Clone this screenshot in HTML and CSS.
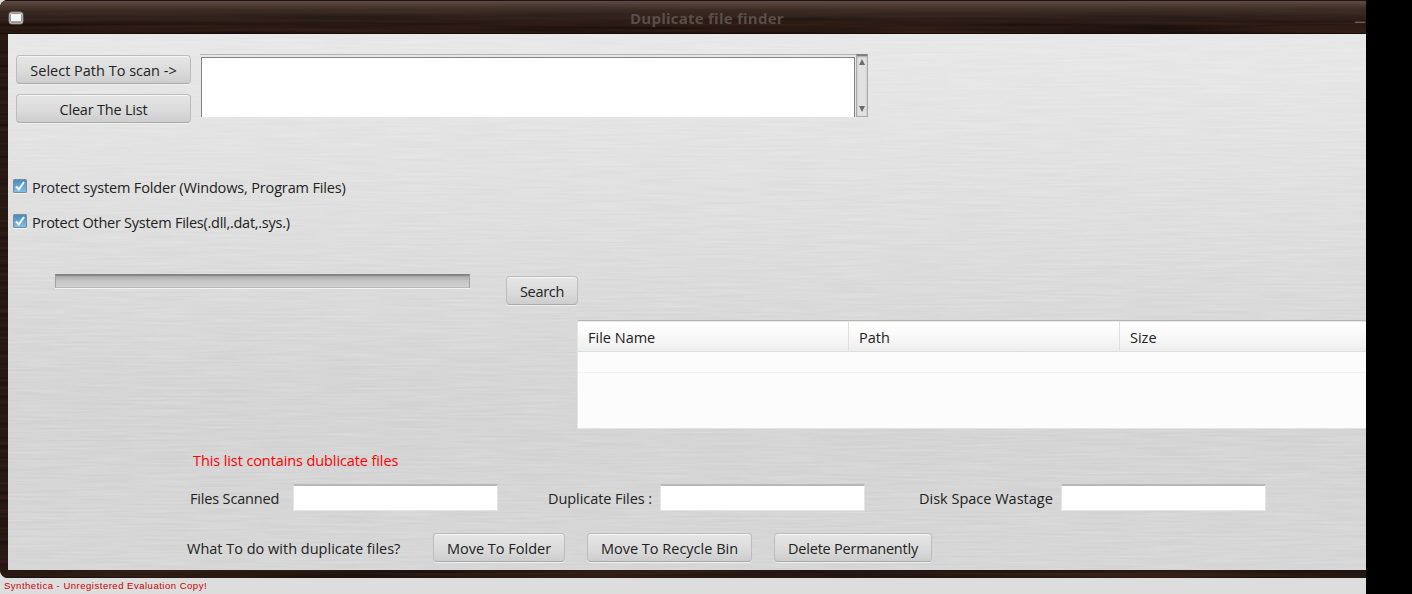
FILE: index.html
```html
<!DOCTYPE html>
<html lang="en">
<head>
<meta charset="utf-8">
<title>Duplicate file finder</title>
<link rel="stylesheet" href="styles.css">
</head>
<body>
<div class="screen">
  <div class="window">
    <svg class="texture" width="1366" height="578" aria-hidden="true">
      <filter id="wood" x="0" y="0" width="100%" height="100%" color-interpolation-filters="sRGB">
        <feTurbulence type="fractalNoise" baseFrequency="0.004 0.22" numOctaves="3" seed="8"/>
        <feColorMatrix values="0.17 0 0 0 0.072  0.1 0 0 0 0.045  0.06 0 0 0 0.042  0 0 0 0 1"/>
      </filter>
      <rect width="1366" height="578" filter="url(#wood)"/>
    </svg>
    <header class="titlebar">
      <svg class="app-icon" width="16" height="14" viewBox="0 0 16 14">
        <rect x="0.5" y="0.5" width="15" height="13" rx="3.5" fill="#83776f"/>
        <rect x="1.5" y="1.5" width="13" height="11" rx="2.5" fill="#e0dcdb"/>
        <rect x="2.5" y="2.5" width="11" height="9" rx="1.5" fill="#514b4b"/>
        <rect x="3" y="3" width="10" height="7.5" fill="#f5f4f8"/>
      </svg>
      <h1 class="title">Duplicate file finder</h1>
      <span class="minimize"></span>
    </header>
    <main class="panel">
      <svg class="texture" width="1358" height="536" aria-hidden="true">
        <filter id="brushed" x="0" y="0" width="100%" height="100%" color-interpolation-filters="sRGB">
          <feTurbulence type="fractalNoise" baseFrequency="0.016 0.5" numOctaves="3" seed="4"/>
          <feColorMatrix values="0 0 0 0 1  0 0 0 0 1  0 0 0 0 1  0.3 0 0 0 -0.07"/>
        </filter>
        <rect width="1358" height="536" filter="url(#brushed)"/>
      </svg>
      <section class="paths">
        <div class="path-buttons">
          <button class="btn"><span class="t-select">Select Path To scan -&gt;</span></button>
          <button class="btn"><span class="t-clear">Clear The List</span></button>
        </div>
        <div class="listbox">
          <div class="list"></div>
          <div class="scrollbar">
            <svg width="6" height="6" viewBox="0 0 6 6"><path d="M3 0L6 6H0z" fill="#6b6b6b"/></svg>
            <svg width="6" height="6" viewBox="0 0 6 6"><path d="M0 0H6L3 6z" fill="#6b6b6b"/></svg>
          </div>
        </div>
      </section>
      <section class="options">
        <label class="option"><svg class="check" width="14" height="15" viewBox="0 0 14 15"><use href="#tick"/></svg><span class="t-opt1">Protect system Folder (Windows, Program Files)</span></label>
        <label class="option"><svg class="check" width="14" height="15" viewBox="0 0 14 15"><use href="#tick"/></svg><span class="t-opt2">Protect Other System Files(.dll,.dat,.sys.)</span></label>
      </section>
      <section class="search">
        <div class="progress"></div>
        <button class="btn"><span class="t-search">Search</span></button>
      </section>
      <section class="table">
        <div class="thead">
          <div class="th"><span>File Name</span></div><div class="th"><span>Path</span></div><div class="th"><span>Size</span></div>
        </div>
        <div class="row"></div>
      </section>
      <p class="notice">This list contains dublicate files</p>
      <section class="stats">
        <label class="stat"><span class="t-scanned">Files Scanned</span><input class="field" type="text"></label>
        <label class="stat"><span class="t-dup">Duplicate Files :</span><input class="field" type="text"></label>
        <label class="stat"><span>Disk Space Wastage</span><input class="field" type="text"></label>
      </section>
      <section class="actions">
        <span class="question">What To do with duplicate files?</span>
        <button class="btn w-folder"><span>Move To Folder</span></button>
        <button class="btn w-bin"><span>Move To Recycle Bin</span></button>
        <button class="btn w-delete"><span class="t-delete">Delete Permanently</span></button>
      </section>
    </main>
  </div>
  <footer class="status">Synthetica - Unregistered Evaluation Copy!</footer>
</div>
<svg class="defs" width="0" height="0">
  <defs>
    <linearGradient id="blue" x2="0" y2="1"><stop offset="0" stop-color="#478cc2"/><stop offset="1" stop-color="#7fc0e8"/></linearGradient>
    <g id="tick">
      <rect y="1" width="14" height="14" rx="1.5" fill="#f5f5f5"/>
      <rect width="14" height="14" rx="1.5" fill="#7b8b98"/>
      <rect x="1" y="1.5" width="12" height="11.5" fill="url(#blue)"/>
      <path d="M3 7.5L5.8 10.5L11 3" fill="none" stroke="#fff" stroke-width="2"/>
    </g>
  </defs>
</svg>
</body>
</html>
```
FILE: styles.css
```css
* { box-sizing: border-box; }
body { margin: 0; background: #000; overflow: hidden; font: 14.5px/20px "Open Sans", "Noto Sans", sans-serif; color: #222; }
span { white-space: nowrap; }
.defs { position: absolute; }
.screen { width: 1366px; height: 594px; background: #ddd; overflow: hidden; }
.window { position: relative; height: 578px; padding: 0 0 8px 8px; background: #281811; border-radius: 8px 0 0 8px; overflow: hidden; }
.texture { position: absolute; top: 0; left: 0; z-index: 0; }
.titlebar { position: relative; height: 34px; margin-left: -8px; padding-left: 8px; display: flex; align-items: center; border-top: 1px solid #1d1411; box-shadow: inset 0 -1px #1a0d0a; background: linear-gradient(#5e4a42, #45382fa0 9px, #3a302b50 17px, #0000 24px); }
.app-icon { margin-top: 0; }
.title { flex: 1; margin: 1px 0 0 606px; font-size: 15px; line-height: 20px; font-weight: 700; letter-spacing: 0.24px; color: #5b4e49; white-space: nowrap; }
.minimize { width: 10px; height: 2px; margin-top: 9px; margin-right: 1px; background: #665d58; border-top: 1px solid #3c3430; }
.panel { position: relative; width: 1358px; height: 536px; padding-top: 20px; background: linear-gradient(#e6e6e6, #dcdcdc 35%, #d2d2d2 65%, #d1d1d1 75%, #d3d3d3); overflow: hidden; }
.panel > section, .panel > p { position: relative; }
.btn { display: flex; align-items: center; justify-content: center; height: 29px; padding: 2px 0 0; border: 1px solid #bcbcbc; border-bottom-color: #a9a9a9; border-radius: 4px; background: linear-gradient(#e6e6e6, #dadada 60%, #cdcdcd); box-shadow: inset 0 1px #f6f6f6, 0 1px #f0f0f0; font: inherit; color: #222; }
.paths { display: flex; height: 70px; padding-left: 8px; }
.path-buttons { width: 175px; margin-right: 9px; padding-top: 1px; display: flex; flex-direction: column; gap: 10px; }
.listbox { width: 668px; height: 63px; display: flex; border-top: 1px solid #b5b5b5; }
.list { width: 654px; height: 60px; margin: 2px 1px 0; background: #fff; border: 1px solid #81818a; border-bottom: 0; }
.scrollbar { width: 12px; height: 63px; margin-top: -1px; display: flex; flex-direction: column; align-items: center; justify-content: space-between; padding: 3px 0 4px; background: #e1e1e1; border: 1px solid #aaa; border-top: 2px solid #808080; box-shadow: inset 0 1px 2px #aaa; }
.options { margin-top: 54px; padding-left: 5px; display: flex; flex-direction: column; gap: 15px; }
.option { display: flex; height: 20px; gap: 5px; }
.check { margin-top: 1px; }
.t-opt1 { letter-spacing: -0.155px; }
.t-opt2 { letter-spacing: -0.26px; }
.t-clear { letter-spacing: -0.2px; }
.t-search { letter-spacing: -0.3px; }
.t-delete { letter-spacing: -0.22px; }
.search { display: flex; gap: 36px; height: 31px; margin: 41px 0 0 47px; }
.progress { width: 415px; height: 14px; background: linear-gradient(#aaa, #c6c6c6 5px, #d1d1d1); border: 1px solid #a0a0a0; border-top: 2px solid #858585; border-bottom-color: #b8b8b8; box-shadow: 0 1px #f3f3f3; }
.search .btn { width: 72px; margin-top: 2px; }
.table { margin: 15px 0 0 569px; height: 109px; background: #fcfcfc; border: 1px solid #e4e4e4; border-right: 0; border-top: 1px solid #b5b5b5; overflow: hidden; }
.thead { display: flex; height: 31px; border-top: 1px solid #e9e9e9; border-bottom: 1px solid #dcdcdc; background: linear-gradient(#fff, #fcfcfc 30%, #eee); }
.th { flex: none; width: 271px; padding: 6px 10px 0; border-right: 1px solid #dfdfdf; }
.th:last-child { border: 0; }
.row { height: 21px; border-bottom: 1px solid #f2f2f2; }
.notice { margin: 22px 0 0 185px; height: 20px; color: #f00; letter-spacing: -0.1px; }
.stats { display: flex; height: 27px; margin: 13px 0 0 182px; }
.stat { display: flex; align-items: center; height: 27px; }
.stat span { padding-top: 2px; }
.stat .t-scanned { letter-spacing: -0.17px; }
.stat .t-dup { letter-spacing: -0.06px; }
.stat:nth-child(1) { width: 358px; }
.stat:nth-child(2) { width: 371px; }
.stat:nth-child(1) span { flex: none; width: 103px; }
.stat:nth-child(2) span { flex: none; width: 112px; }
.stat:nth-child(3) span { flex: none; width: 142px; }
.field { width: 205px; height: 27px; padding: 0 4px; border: 1px solid #e5e5e5; border-top: 2px solid #b7b7b7; background: #fff; font: inherit; }
.actions { display: flex; height: 29px; margin: 22px 0 0 179px; }
.question { width: 246px; padding-top: 6px; }
.w-folder { width: 132px; margin-right: 22px; }
.w-bin { width: 165px; margin-right: 22px; }
.w-delete { width: 158px; }
.status { padding: 1px 0 0 4px; font: 9.5px/14px "Liberation Sans", Arial, sans-serif; letter-spacing: 0.51px; color: #c00; }
```
